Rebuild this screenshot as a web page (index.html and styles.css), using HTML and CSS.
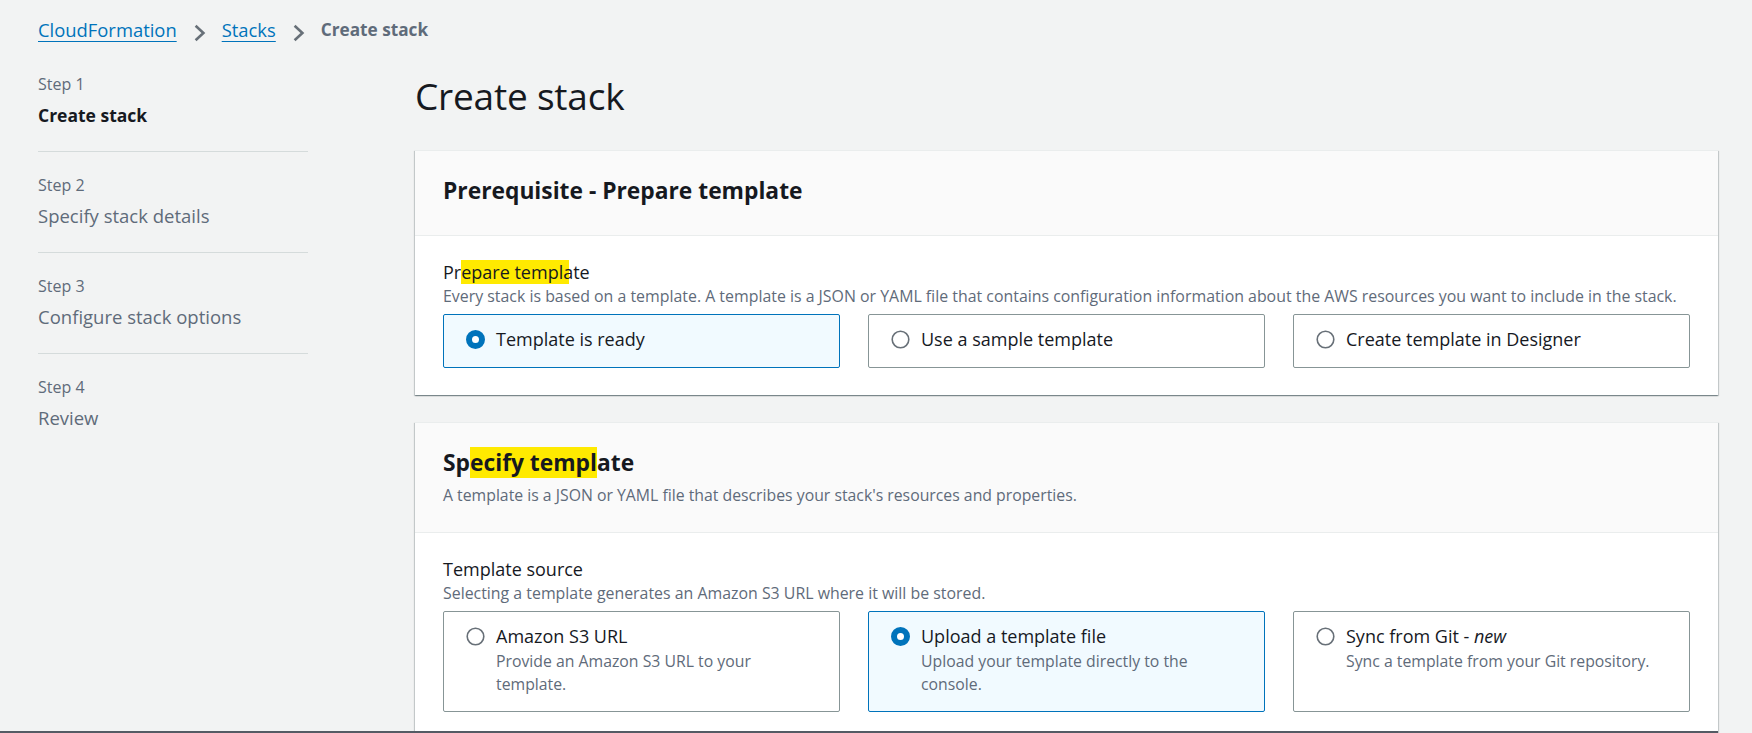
FILE: index.html
```html
<!DOCTYPE html>
<html lang="en">
<head>
<meta charset="utf-8">
<title>Create stack</title>
<link rel="stylesheet" href="styles.css">
</head>
<body>
<div class="page">
  <nav class="crumbs">
    <a class="crumb-link" href="#">CloudFormation</a>
    <svg class="crumb-sep" width="13" height="18" viewBox="0 0 13 18"><path d="M2.6 1.8 L10.4 9 L2.6 16.2" fill="none" stroke="#687078" stroke-width="2.6"/></svg>
    <a class="crumb-link" href="#">Stacks</a>
    <svg class="crumb-sep" width="13" height="18" viewBox="0 0 13 18"><path d="M2.6 1.8 L10.4 9 L2.6 16.2" fill="none" stroke="#687078" stroke-width="2.6"/></svg>
    <span class="crumb-current">Create stack</span>
  </nav>

  <div class="layout">
    <aside class="steps">
      <div class="step step-active">
        <div class="step-num">Step 1</div>
        <div class="step-name">Create stack</div>
      </div>
      <div class="step">
        <div class="step-num">Step 2</div>
        <div class="step-name">Specify stack details</div>
      </div>
      <div class="step">
        <div class="step-num">Step 3</div>
        <div class="step-name">Configure stack options</div>
      </div>
      <div class="step">
        <div class="step-num">Step 4</div>
        <div class="step-name">Review</div>
      </div>
    </aside>

    <main class="main">
      <h1 class="title">Create stack</h1>

      <section class="card">
        <header class="card-head">
          <h2 class="card-title">Prerequisite - Prepare template</h2>
        </header>
        <div class="card-body">
          <div class="field-label">Pr<span class="hl hl-ext">epare templ</span>ate</div>
          <div class="field-desc">Every stack is based on a template. A template is a JSON or YAML file that contains configuration information about the AWS resources you want to include in the stack.</div>
          <div class="tiles">
            <div class="tile tile-selected">
              <svg class="radio" width="19" height="19" viewBox="0 0 19 19"><circle cx="9.5" cy="9.5" r="6.5" fill="#fff" stroke="#0073bb" stroke-width="6"/></svg>
              <div class="tile-text"><div class="tile-label">Template is ready</div></div>
            </div>
            <div class="tile">
              <svg class="radio" width="19" height="19" viewBox="0 0 19 19"><circle cx="9.5" cy="9.5" r="8.3" fill="#fff" stroke="#687078" stroke-width="1.6"/></svg>
              <div class="tile-text"><div class="tile-label">Use a sample template</div></div>
            </div>
            <div class="tile">
              <svg class="radio" width="19" height="19" viewBox="0 0 19 19"><circle cx="9.5" cy="9.5" r="8.3" fill="#fff" stroke="#687078" stroke-width="1.6"/></svg>
              <div class="tile-text"><div class="tile-label">Create template in Designer</div></div>
            </div>
          </div>
        </div>
      </section>

      <section class="card">
        <header class="card-head">
          <h2 class="card-title">Sp<span class="hl">ecify templ</span>ate</h2>
          <div class="card-desc">A template is a JSON or YAML file that describes your stack's resources and properties.</div>
        </header>
        <div class="card-body">
          <div class="field-label">Template source</div>
          <div class="field-desc">Selecting a template generates an Amazon S3 URL where it will be stored.</div>
          <div class="tiles">
            <div class="tile">
              <svg class="radio" width="19" height="19" viewBox="0 0 19 19"><circle cx="9.5" cy="9.5" r="8.3" fill="#fff" stroke="#687078" stroke-width="1.6"/></svg>
              <div class="tile-text">
                <div class="tile-label">Amazon S3 URL</div>
                <div class="tile-desc">Provide an Amazon S3 URL to your template.</div>
              </div>
            </div>
            <div class="tile tile-selected">
              <svg class="radio" width="19" height="19" viewBox="0 0 19 19"><circle cx="9.5" cy="9.5" r="6.5" fill="#fff" stroke="#0073bb" stroke-width="6"/></svg>
              <div class="tile-text">
                <div class="tile-label">Upload a template file</div>
                <div class="tile-desc">Upload your template directly to the console.</div>
              </div>
            </div>
            <div class="tile">
              <svg class="radio" width="19" height="19" viewBox="0 0 19 19"><circle cx="9.5" cy="9.5" r="8.3" fill="#fff" stroke="#687078" stroke-width="1.6"/></svg>
              <div class="tile-text">
                <div class="tile-label">Sync from Git - <em>new</em></div>
                <div class="tile-desc">Sync a template from your Git repository.</div>
              </div>
            </div>
          </div>
        </div>
      </section>
    </main>
  </div>
</div>
<div class="screen-edge"></div>
</body>
</html>
```

FILE: styles.css
```css
html {
  overflow: hidden;
}

body {
  margin: 0;
  background: #f2f3f3;
  font-family: "Open Sans", "Noto Sans", sans-serif;
  color: #16191f;
}

.page {
  padding: 18px 34px 0 38px;
}

/* Breadcrumbs */
.crumbs {
  display: flex;
  align-items: center;
  gap: 16px;
  font-size: 18.4px;
  line-height: 24px;
  height: 24px;
}

.crumb-link {
  color: #0073bb;
  text-decoration: underline;
  text-underline-offset: 4px;
  text-decoration-thickness: 1px;
}

.crumb-sep {
  margin-top: 6px;
  flex: none;
}

.crumb-current {
  color: #5f6b7a;
  font-weight: 700;
  font-size: 17.2px;
}

/* Layout */
.layout {
  display: flex;
  margin-top: 8px;
}

.steps {
  width: 270px;
  flex: none;
  margin-right: 107px;
}

.step {
  padding: 22px 0 23px;
  border-top: 1px solid #d5dbdb;
  color: #5f6b7a;
}

.step:first-child {
  border-top: none;
  padding-top: 23px;
}

.step-num {
  font-size: 16px;
  line-height: 22px;
}

.step-name {
  font-size: 18.5px;
  line-height: 26px;
  margin-top: 7px;
}

.step-active .step-name {
  color: #16191f;
  font-weight: 700;
  font-size: 17.5px;
}

.main {
  flex: 1;
  min-width: 0;
}

.title {
  margin: 24px 0 32px;
  font-size: 37px;
  line-height: 44px;
  font-weight: 400;
  color: #16191f;
  letter-spacing: -0.2px;
}

/* Cards */
.card {
  background: #fff;
  border-top: 1px solid #eaeded;
  box-shadow: 0 1px 1px 0 rgba(0, 28, 36, 0.3), 1px 1px 1px 0 rgba(0, 28, 36, 0.15), -1px 1px 1px 0 rgba(0, 28, 36, 0.15);
}

.card + .card {
  margin-top: 27px;
}

.card-head {
  background: #fafafa;
  border-bottom: 1px solid #eaeded;
  padding: 24px 28px 28px;
}

.card-title {
  margin: 0;
  font-size: 22.8px;
  line-height: 32px;
  font-weight: 700;
  color: #16191f;
}

.card-desc {
  margin: 5px 0 -2px;
  font-size: 15.8px;
  line-height: 22px;
  color: #5f6b7a;
}

.card-body {
  padding: 23px 28px 27px;
}

.field-label {
  font-size: 18px;
  line-height: 26px;
  color: #16191f;
}

.field-desc {
  font-size: 15.9px;
  line-height: 22px;
  color: #5f6b7a;
  margin-bottom: 7px;
}

.hl {
  background: #ffea00;
}

.hl-ext {
  box-shadow: 6px 0 0 #ffea00;
}

/* Radio tiles */
.tiles {
  display: grid;
  grid-template-columns: 1fr 1fr 1fr;
  gap: 28px;
}

.tile {
  display: flex;
  align-items: flex-start;
  gap: 11px;
  padding: 11px 20px 15px 22px;
  border: 1px solid #879596;
  border-radius: 2px;
  background: #fff;
}

.tile-selected {
  border-color: #0073bb;
  background: #f1faff;
}

.radio {
  flex: none;
  margin-top: 4px;
}

.tile-label {
  font-size: 18px;
  line-height: 26px;
  color: #16191f;
}

.tile-desc {
  font-size: 15.8px;
  line-height: 23px;
  color: #5f6b7a;
  margin-top: 1px;
}

.screen-edge {
  position: fixed;
  left: 0;
  right: 34px;
  bottom: 0;
  height: 2px;
  background: #545b64;
}
```
